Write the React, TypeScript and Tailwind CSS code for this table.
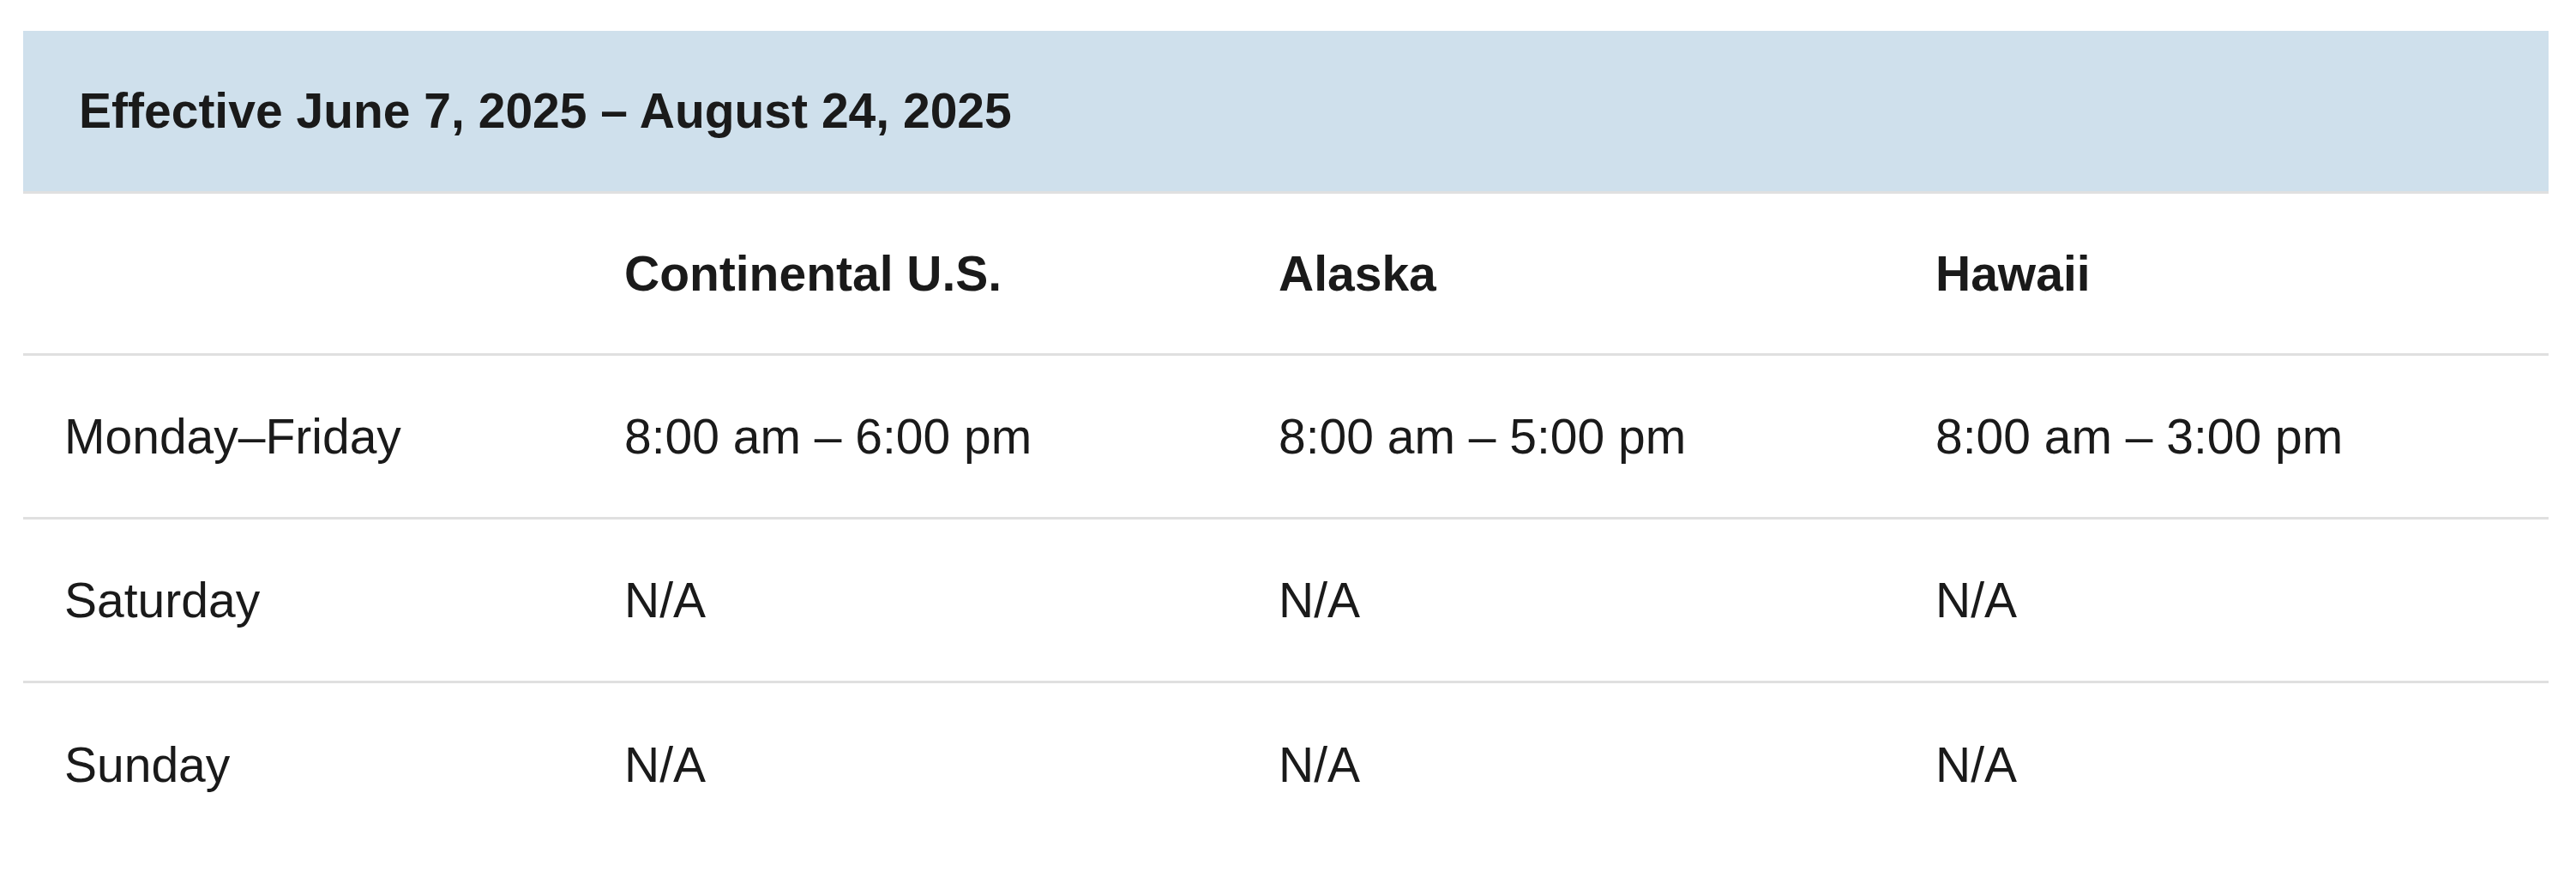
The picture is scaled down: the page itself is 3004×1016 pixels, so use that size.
import React from "react";

const rows = [
  ["Monday–Friday", "8:00 am – 6:00 pm", "8:00 am – 5:00 pm", "8:00 am – 3:00 pm"],
  ["Saturday", "N/A", "N/A", "N/A"],
  ["Sunday", "N/A", "N/A", "N/A"],
];

export default function App() {
  return (
    <div
      className="min-h-[1016px] w-[3004px] bg-white pt-[36px] pl-[27px] text-[#1a1a1a]"
      style={{ fontFamily: '"Liberation Sans", Arial, Helvetica, sans-serif' }}
    >
      <div className="w-[2945px]">
        <div className="flex h-[190px] items-center border-b-[3px] border-[#e0e0e0] bg-[#cfe0ec] pl-[65px]">
          <h2 className="text-[57px] font-bold leading-none">Effective June 7, 2025 – August 24, 2025</h2>
        </div>
        <div className="grid h-[189px] grid-cols-[653px_763px_766px_763px] items-center border-b-[3px] border-[#e0e0e0] text-[57px] font-bold leading-none">
          <div className="pl-[48px]"></div>
          <div className="pl-[48px]">Continental U.S.</div>
          <div className="pl-[48px]">Alaska</div>
          <div className="pl-[48px]">Hawaii</div>
        </div>
        {rows.map((r, i) => (
          <div
            key={i}
            className={
              i < rows.length - 1
                ? "grid h-[191px] grid-cols-[653px_763px_766px_763px] items-center border-b-[3px] border-[#e0e0e0] text-[57px] leading-none"
                : "grid h-[191px] grid-cols-[653px_763px_766px_763px] items-center text-[57px] leading-none"
            }
          >
            {r.map((c, j) => (
              <div key={j} className="pl-[48px]">
                {c}
              </div>
            ))}
          </div>
        ))}
      </div>
    </div>
  );
}
